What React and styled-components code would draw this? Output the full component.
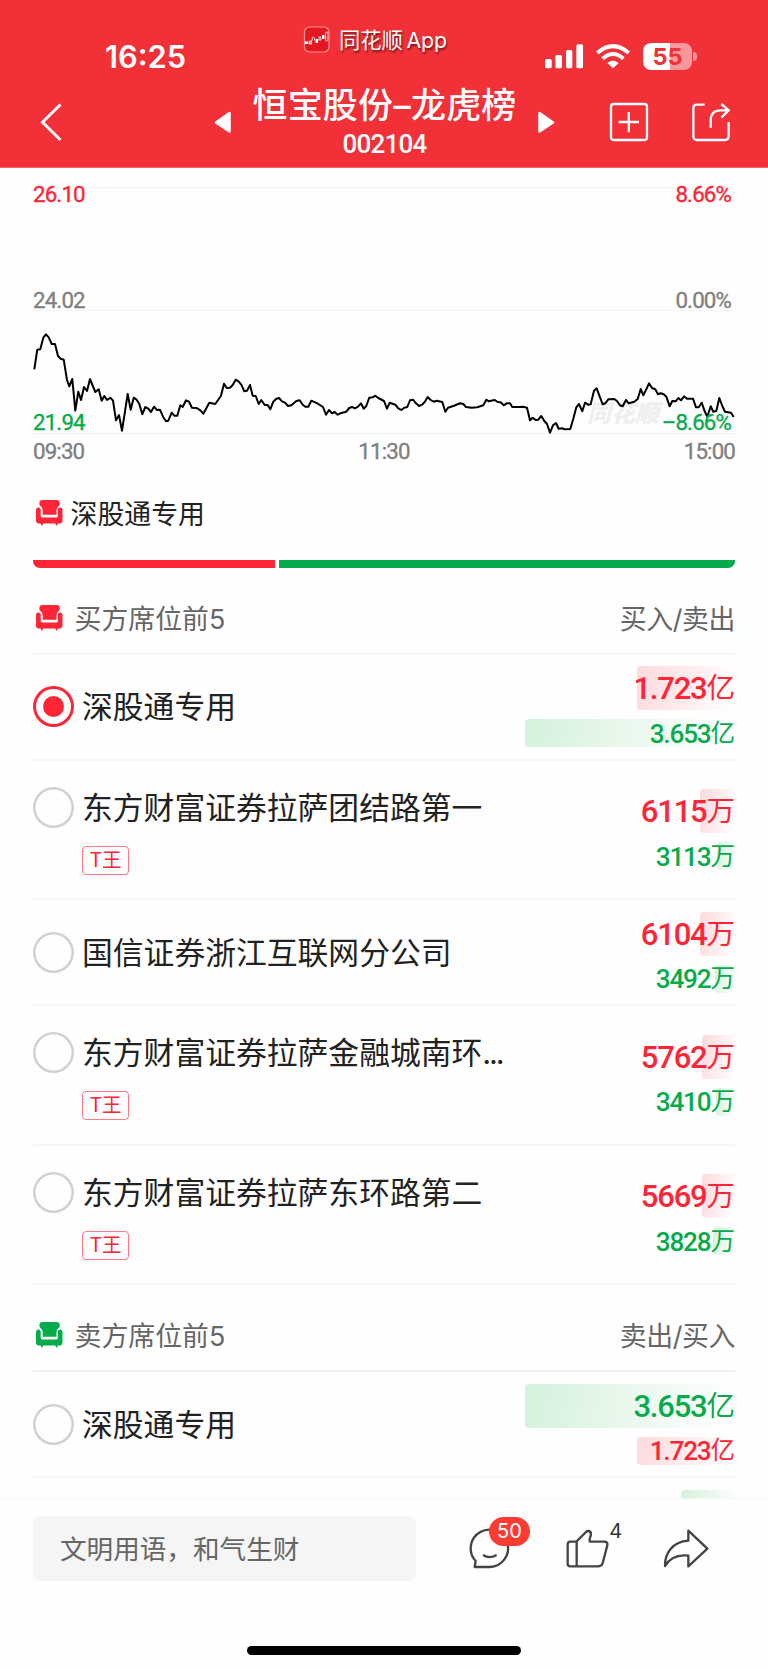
import React from "react";
import styled, { createGlobalStyle } from "styled-components";

const RED = "#ff2436";
const GREEN = "#07ab4b";
const CJK = 'Inter, "Noto Sans CJK SC", sans-serif';
const DIGITS = 'Roboto, "Noto Sans CJK SC", sans-serif';

const GlobalStyle = createGlobalStyle`
  * { box-sizing: border-box; }
  body { margin: 0; background: #fefefe; font-family: ${CJK}; }
  svg { display: block; flex: none; }
`;

const Screen = styled.div`
  width: 768px;
  height: 1669px;
  display: flex;
  flex-direction: column;
  overflow: hidden;
  background: #fefefe;
  white-space: nowrap;
`;

/* ---------- header ---------- */

const Header = styled.header`
  height: 168px;
  flex: none;
  background: #f23038;
  border-bottom: 1px solid #f5666c;
  color: #fff;
`;

const StatusBar = styled.div`
  height: 82px;
  display: flex;
  align-items: flex-start;
`;

const Clock = styled.div`
  width: 198px;
  margin: 39px 0 0 105px;
  font-size: 30.8px;
  line-height: 36px;
  font-weight: 600;
`;

const AppMark = styled.div`
  width: 242px;
  margin-top: 26px;
  display: flex;
  align-items: center;
  gap: 9px;
  font-size: 21.3px;
  line-height: 26px;
  word-spacing: -2.5px;
  text-shadow: 1px 2px 2px rgba(60, 0, 0, 0.65);
`;

const DeviceIcons = styled.div`
  margin-top: 43px;
  display: flex;
  align-items: center;
  gap: 13px;
`;

const Battery = styled.div`
  width: 49px;
  height: 27px;
  border-radius: 8px;
  background: linear-gradient(90deg, #fff 55%, #f8989c 55%);
  color: #f23038;
  font-size: 23.5px;
  line-height: 27px;
  font-weight: 700;
  text-align: center;
  position: relative;

  &::after {
    content: "";
    position: absolute;
    left: 50px;
    top: 9px;
    width: 4px;
    height: 9px;
    border-radius: 0 4px 4px 0;
    background: #f8989c;
  }
`;

const NavBar = styled.nav`
  height: 85px;
  display: flex;
  align-items: flex-start;
  padding: 20px 0 0 39px;
`;

const TitleGroup = styled.div`
  width: 341px;
  flex: none;
  margin-left: 151px;
  display: flex;
  align-items: flex-start;

  > svg { margin-top: 9px; }
`;

const TitleText = styled.div`
  width: 305px;
  margin-top: -18px;
  text-align: center;
`;

const Title = styled.h1`
  margin: 0;
  font-size: 35px;
  line-height: 42px;
  font-weight: 500;
  letter-spacing: 0.2px;
`;

const StockCode = styled.div`
  margin-top: 4px;
  font-family: ${DIGITS};
  font-size: 26px;
  line-height: 28px;
  font-weight: 500;
  letter-spacing: -0.8px;
`;

const NavActions = styled.div`
  display: flex;
  gap: 42px;
  margin-left: 54px;
`;

/* ---------- chart ---------- */

const Content = styled.main`
  height: 1330px;
  flex: none;
  overflow: hidden;
  padding: 19px 33px 0;
`;

const Chart = styled.section`
  position: relative;
  width: 702px;
`;

const Band = styled.div`
  height: 123px;
  border-top: 1px solid #f4f4f4;
  display: flex;
  flex-direction: column;
  justify-content: ${(p) => (p.$single ? "flex-end" : "space-between")};
  padding-bottom: ${(p) => (p.$single ? 3 : 2)}px;
`;

const Labels = styled.div`
  position: relative;
  z-index: 1;
  display: flex;
  justify-content: space-between;
  padding-right: ${(p) => p.$inset || 0}px;
  color: ${(p) => p.$color};
  font-family: ${DIGITS};
  font-size: 22.3px;
  line-height: ${(p) => p.$line || 15}px;
  letter-spacing: -0.85px;
  -webkit-text-stroke: 0.35px currentColor;
`;

const TimeAxis = styled.div`
  border-top: 1px solid #f0f0f0;
  padding-top: 10px;
`;

const PriceLine = styled.svg`
  position: absolute;
  left: 0;
  top: 0;
`;

const Watermark = styled.div`
  position: absolute;
  left: 554px;
  top: 213px;
  color: #efefef;
  font-size: 24px;
  line-height: 28px;
  font-weight: 900;
  font-style: italic;
`;

/* ---------- seats ---------- */

const SeatTitle = styled.div`
  display: flex;
  align-items: center;
  gap: 8px;
  height: 34px;
  margin-top: 38px;
  padding-left: 3px;
  color: #222;
  font-size: 26.9px;
  line-height: 34px;

  > svg { margin-bottom: 2px; }
`;

const Ratio = styled.div`
  display: flex;
  gap: 4px;
  height: 8px;
  margin-top: 29px;
  border-radius: 0 0 7px 7px;
  overflow: hidden;
`;

const RatioPart = styled.div`
  flex: ${(p) => p.$share};
  background: ${(p) => p.$color};
`;

const ListHead = styled.div`
  height: ${(p) => p.$height}px;
  border-bottom: ${(p) => (p.$height > 86 ? 2 : 1)}px solid #f1f1f1;
  display: flex;
  align-items: flex-end;
  justify-content: space-between;
  padding: 0 0 17px 3px;
  color: #666;
  font-size: 26.9px;
  line-height: 34px;
`;

const HeadLabel = styled.div`
  display: flex;
  align-items: center;
  gap: 12px;

  > svg { margin-bottom: 2px; }
`;

const HeadValue = styled.div`
  letter-spacing: -0.4px;
`;

const Row = styled.div`
  height: ${(p) => p.$height}px;
  border-bottom: 2px solid #f6f6f6;
  display: flex;
  align-items: center;
`;

const Radio = styled.div`
  width: 41px;
  height: 41px;
  flex: none;
  align-self: ${(p) => (p.$top ? "flex-start" : "center")};
  margin-top: ${(p) => (p.$top ? 26 : 0)}px;
  border-radius: 50%;
  box-shadow: inset 0 0 0 ${(p) => (p.$on ? `3px ${RED}` : "2.5px #d0d0d0")};
  display: flex;
  align-items: center;
  justify-content: center;

  &::after {
    content: "";
    width: 21px;
    height: 21px;
    border-radius: 50%;
    background: ${(p) => (p.$on ? RED : "transparent")};
  }
`;

const Broker = styled.div`
  flex: 1;
  align-self: ${(p) => (p.$top ? "flex-start" : "center")};
  margin-top: ${(p) => (p.$top ? 26 : 0)}px;
  padding-left: 8px;
`;

const Name = styled.div`
  color: #222;
  font-size: 30.8px;
  line-height: 41px;
`;

const Dots = styled.span`
  letter-spacing: -2.2px;
`;

const Tag = styled.div`
  width: 47px;
  height: 29px;
  margin-top: 18px;
  border: 1px solid #ff7c86;
  border-radius: 4px;
  color: ${RED};
  font-size: 19.5px;
  line-height: 27px;
  text-align: center;
`;

const Amounts = styled.div`
  width: 211px;
  display: flex;
  flex-direction: column;
  align-items: flex-end;
  gap: 9px;
`;

const tint = { buy: "255, 36, 54", sell: "7, 180, 50" };

const Amount = styled.div`
  width: ${(p) => p.$bar}px;
  height: ${(p) => (p.$large ? 44 : 28)}px;
  padding-top: ${(p) => (p.$large ? 2 : 1)}px;
  display: flex;
  justify-content: flex-end;
  align-items: center;
  border-radius: 4px 0 0 4px;
  background: linear-gradient(
    100deg,
    rgba(${(p) => tint[p.$side]}, 0.16) 5%,
    rgba(${(p) => tint[p.$side]}, 0) 96%
  );
  color: ${(p) => (p.$side === "buy" ? RED : GREEN)};
  font-family: ${DIGITS};
  font-size: ${(p) => (p.$large ? 31 : 26.2)}px;
  line-height: ${(p) => (p.$large ? 44 : 28)}px;
  font-weight: 500;
  letter-spacing: ${(p) => (p.$large ? -1.2 : -1.2)}px;
`;

const Unit = styled.span`
  font-size: ${(p) => (p.$large ? 28.5 : 24.5)}px;
  font-weight: 400;
  letter-spacing: 0;
`;

/* ---------- footer ---------- */

const Footer = styled.footer`
  height: 171px;
  flex: none;
  border-top: 1px solid #f6f6f6;
  background: #fefefe;
  display: flex;
  flex-direction: column;
  align-items: center;
  justify-content: space-between;
  padding: 17px 0 14px;
`;

const ActionBar = styled.div`
  width: 768px;
  display: flex;
  align-items: flex-start;
  padding-left: 33px;
`;

const CommentInput = styled.div`
  width: 383px;
  height: 65px;
  margin-right: 52px;
  border-radius: 8px;
  background: #f5f5f5;
  color: #666;
  padding-left: 27px;
  font-size: 26.6px;
  line-height: 67px;
`;

const Action = styled.div`
  position: relative;
  margin: 12px ${(p) => p.$gap}px 0 0;
`;

const Badge = styled.div`
  position: absolute;
  left: 21px;
  top: -11px;
  width: 41px;
  height: 29px;
  border-radius: 15px;
  background: #fa3c32;
  color: #fff;
  font-size: 20px;
  line-height: 29px;
  text-align: center;
`;

const LikeCount = styled.div`
  position: absolute;
  left: 44px;
  top: -9px;
  color: #333;
  font-size: 20px;
  line-height: 24px;
`;

const HomeIndicator = styled.div`
  width: 274px;
  height: 9px;
  border-radius: 5px;
  background: #000;
`;

/* ---------- drawings ---------- */

const Sofa = ({ color }) => (
  <svg width="26.5" height="25.5" viewBox="0 0 79 76" fill={color}>
    <path d="M10 10Q10 0 20 0H61Q71 0 71 10Q71 16 68 18Q61 22 61 32V44H20V32Q20 22 13 18Q10 16 10 10Z" />
    <path d="M0 30Q0 22 7 22Q14 22 14 30V46Q14 52 18 52H61Q65 52 65 46V30Q65 22 72 22Q79 22 79 30V60Q79 70 69 70H65L63 76H60L58 70H21L19 76H16L14 70H10Q0 70 0 60Z" />
  </svg>
);

const AppLogo = () => (
  <svg width="27" height="27" viewBox="0 0 27 27">
    <rect x="1.5" y="1" width="24.5" height="25" rx="5" fill="#e3191f" stroke="#fa9296" strokeWidth="1.2" />
    <g fill="#fff">
      <rect x="2" y="15.5" width="3.5" height="2.5" />
      <rect x="12.5" y="13" width="2.5" height="4" />
      <rect x="19" y="9" width="2.5" height="4" />
    </g>
    <g fill="none" stroke="#fff" strokeWidth="0.8">
      <rect x="6.7" y="15" width="1.8" height="3" />
      <path d="M9.2 14.5V12L10.4 11L11.6 12V14.5" />
      <rect x="16" y="11" width="1.8" height="3" />
      <rect x="22.6" y="6" width="2.3" height="9" rx="1" />
    </g>
  </svg>
);

const Signal = () => (
  <svg width="38" height="25" viewBox="531 132 114 75" fill="#fff">
    <rect x="531" y="177" width="20" height="28" rx="5" />
    <rect x="562" y="165" width="20" height="40" rx="5" />
    <rect x="594" y="150" width="19" height="55" rx="5" />
    <rect x="625" y="133" width="20" height="72" rx="5" />
  </svg>
);

const Wifi = () => (
  <svg width="34" height="25" viewBox="684 132 102 75" fill="none" stroke="#fff" strokeWidth="12">
    <path d="M688 159Q735 118 782 159" />
    <path d="M704 176Q735 148 766 176" />
    <path d="M735 205L718 189Q735 176 752 189Z" fill="#fff" stroke="none" />
  </svg>
);

const Back = () => (
  <svg width="24" height="40" viewBox="0 0 24 40" fill="none" stroke="#fff" strokeWidth="3">
    <path d="M21.500 2.500L3.500 20.200L21.500 38" />
  </svg>
);

const Arrow = ({ flip }) => (
  <svg width="18" height="22" viewBox="0 0 18 22" fill="#fff" stroke="#fff" strokeWidth="2.500" strokeLinejoin="round">
    <path d={flip ? "M2.500 2L16 11.500L2.500 20.500Z" : "M15.500 2L2 11.500L15.500 20.500Z"} />
  </svg>
);

const AddBox = () => (
  <svg width="40" height="40" viewBox="722 306 120 120" fill="none" stroke="#fff" strokeWidth="7">
    <rect x="728" y="312" width="108" height="108" rx="8" />
    <path d="M751 366H812M781.500 336V397" />
  </svg>
);

const ShareBox = () => (
  <svg width="40" height="40" viewBox="968 306 120 120" fill="none" stroke="#fff" strokeWidth="7">
    <path d="M1009 314H986Q975 314 975 325V409Q975 420 986 420H1070Q1081 420 1081 409V366" />
    <path d="M1027 383V362Q1027 331 1057 331H1080M1059 312L1081 331L1059 353" />
  </svg>
);

const CommentIcon = () => (
  <svg width="43.300" height="41.300" viewBox="60 684 130 124" fill="none" stroke="#444" strokeWidth="7">
    <path d="M80 801H126A56 56 0 1 0 83 783Z" strokeLinejoin="round" />
    <path d="M105 765Q125 778 146 765" />
  </svg>
);

const LikeIcon = () => (
  <svg width="45.300" height="40.700" viewBox="352 684 136 122" fill="none" stroke="#444" strokeWidth="7" strokeLinejoin="round">
    <path d="M387 725H368Q360 725 360 733V791Q360 799 368 799H450Q462 799 465 790L479 736Q481 725 471 725H428Q424 724 427 714L430 703Q430 693 421 693Q418 693 415 696L387 724V799" />
  </svg>
);

const ForwardIcon = () => (
  <svg width="46.700" height="40.700" viewBox="645 684 140 122" fill="none" stroke="#444" strokeWidth="7" strokeLinejoin="round">
    <path d="M651 798C650 760 675 724 721 722V692L778 746L721 799V767C690 763 665 775 651 798Z" />
  </svg>
);

const pricePoints =
  "34.3,369.3 37.3,349.7 40.3,349.3 43.3,337.7 46,334.3 48.7,337.3 51.7,344 55,344 58,356 60.7,358.7 63.7,359.7 67,380 69.3,386.3 72.3,379 75.3,410.7 78.3,391.7 81,400 84,387 87,391 90,379 95.3,392 98.7,389.3 101.7,400.7 104.3,396 107,400 110.3,397.7 113,400.7 116,420.3 119,415 122,430.7 127.7,394 130.7,409.7 133.7,397.7 136.3,399.3 139.3,404 142.3,414.3 145.3,407 148.3,408.7 151,412 154,406.7 157,410 160,409.7 163,416.7 166,421.3 168.3,420.7 171.7,412.7 174.3,415.7 177.3,415.7 180.3,405.3 182.7,407 186,400.3 189,401.7 192,407.7 196.7,408 200.7,410.7 203.3,413.7 209.3,402.7 215.3,404 221,395.7 224,383.7 226.7,388 230,387.7 232.7,385 235.7,379.7 238.7,381.7 241.3,384.7 244.3,391.3 247,390.7 250,385 252.7,395.7 255.7,396 258.7,404 261.3,400 264.7,405 267.7,405 270.3,409.3 273.3,401.7 276,399 279,398 282,401.3 285,402.7 288,406 291.3,405.3 296.3,401 299.7,400.3 302.7,404.7 305.3,406.7 308.3,406.7 311.3,400.7 317.3,403.3 323,407 326,414.7 329,410 332,413.3 334.7,412 337.7,414.7 340.3,413.3 346.3,411.7 349.3,408 352,407 355,408.3 358,406.7 361,403.3 363.7,408.7 366.3,406 369.3,397.7 372.7,397.3 375.3,395.7 378.3,398 384,401 387,408.7 389.7,402.7 395.3,404.7 398.3,408.3 401.3,410 404.3,407.7 407.3,407 410,400.3 413,399.7 416,403.3 419,406 422,404.7 424.7,402 427.7,397 430.7,400 433.7,401.7 436.7,400.7 442.3,402 445.3,411.7 448,407.7 454,405.7 460,403.3 463.3,404 466,407 471.7,407.7 477.3,407.3 483.3,405.3 486.3,399.7 488.7,401.3 494.7,400 497.7,402 500.7,402.3 503.7,405.3 506.7,403.3 510,403.3 512.3,407 519.7,407 523,406.7 527,407.7 530,420.3 532.7,417.7 535.7,420 538.3,419.7 541.3,416 544.3,421 547,424 550,432.7 553,425.3 556,423 558.7,428.7 562,428.3 564.7,429.3 570.3,429 573.3,418.7 576.3,407.3 579,404 582.3,411.3 585,402.7 588,404.7 590.7,404.3 594,390.7 596.7,388.3 599.7,396.7 602.7,404.3 605.3,403.3 608.3,399.3 614.3,399 617,401 620,405.3 622.7,406.3 626,400 628.7,403.3 634.3,401.7 637.7,399 640.7,389 643.3,395.3 646.3,389.3 649,383.3 652,388 655.3,389.3 658,394.3 660.7,393.3 663.7,394.3 666.3,396.7 669.7,406.3 672.3,401 675.7,401.3 678.3,398 681,400.3 684,396.3 687,398.7 693,398.7 696,407.3 698.7,407.3 701.7,402.7 704.7,411.3 707.3,416.7 710.7,406.3 713.3,411.7 716.3,411 719.3,398 722.3,406 725,411.7 731,412.7 733.7,417";

const buyers = [
  { name: "深股通专用", height: 107, on: true, first: ["1.723", "亿", 98], second: ["3.653", "亿", 210] },
  { name: "东方财富证券拉萨团结路第一", height: 139, tag: "T王", first: ["6115", "万", 35], second: ["3113", "万", 18] },
  { name: "国信证券浙江互联网分公司", height: 106, first: ["6104", "万", 35], second: ["3492", "万", 20] },
  { name: "东方财富证券拉萨金融城南环", more: true, height: 140, tag: "T王", first: ["5762", "万", 33], second: ["3410", "万", 19] },
  { name: "东方财富证券拉萨东环路第二", height: 139, tag: "T王", first: ["5669", "万", 33], second: ["3828", "万", 22] },
];

const sellers = [
  { name: "深股通专用", height: 106, first: ["3.653", "亿", 210], second: ["1.723", "亿", 98] },
  { name: "", height: 106, first: ["", "", 54], second: ["", "", 0] },
];

const Value = ({ data: [value, unit, bar], side, large }) => (
  <Amount $bar={bar} $side={side} $large={large}>
    {value}
    <Unit $large={large}>{unit}</Unit>
  </Amount>
);

const SeatRow = ({ seat, sides }) => {
  const top = Boolean(seat.tag);
  return (
    <Row $height={seat.height}>
      <Radio $on={seat.on} $top={top} />
      <Broker $top={top}>
        <Name>
          {seat.name}
          {seat.more && <Dots>...</Dots>}
        </Name>
        {seat.tag && <Tag>{seat.tag}</Tag>}
      </Broker>
      <Amounts>
        <Value data={seat.first} side={sides[0]} large />
        <Value data={seat.second} side={sides[1]} />
      </Amounts>
    </Row>
  );
};

export default function App() {
  return (
    <Screen>
      <GlobalStyle />
      <Header>
        <StatusBar>
          <Clock>16:25</Clock>
          <AppMark>
            <AppLogo />
            <span>同花顺 App</span>
          </AppMark>
          <DeviceIcons>
            <Signal />
            <Wifi />
            <Battery>55</Battery>
          </DeviceIcons>
        </StatusBar>
        <NavBar>
          <Back />
          <TitleGroup>
            <Arrow />
            <TitleText>
              <Title>恒宝股份–龙虎榜</Title>
              <StockCode>002104</StockCode>
            </TitleText>
            <Arrow flip />
          </TitleGroup>
          <NavActions>
            <AddBox />
            <ShareBox />
          </NavActions>
        </NavBar>
      </Header>

      <Content>
        <Chart>
          <Watermark>同花顺</Watermark>
          <Band>
            <Labels $color={RED} $inset={4} $line={13}>
              <span>26.10</span>
              <span>8.66%</span>
            </Labels>
            <Labels $color="#808080" $inset={4}>
              <span>24.02</span>
              <span>0.00%</span>
            </Labels>
          </Band>
          <Band $single>
            <Labels $color={GREEN} $inset={4}>
              <span>21.94</span>
              <span>–8.66%</span>
            </Labels>
          </Band>
          <TimeAxis>
            <Labels $color="#808080">
              <span>09:30</span>
              <span>11:30</span>
              <span>15:00</span>
            </Labels>
          </TimeAxis>
          <PriceLine width="702" height="248" viewBox="33 187 702 248">
            <polyline points={pricePoints} fill="none" stroke="#000" strokeWidth="2" strokeLinejoin="round" />
          </PriceLine>
        </Chart>

        <SeatTitle>
          <Sofa color={RED} />
          <span>深股通专用</span>
        </SeatTitle>
        <Ratio>
          <RatioPart $share={242} $color={RED} />
          <RatioPart $share={456} $color={GREEN} />
        </Ratio>

        <ListHead $height={86}>
          <HeadLabel>
            <Sofa color={RED} />
            <span>买方席位前5</span>
          </HeadLabel>
          <HeadValue>买入/卖出</HeadValue>
        </ListHead>
        {buyers.map((seat) => (
          <SeatRow key={seat.name} seat={seat} sides={["buy", "sell"]} />
        ))}

        <ListHead $height={87}>
          <HeadLabel>
            <Sofa color={GREEN} />
            <span>卖方席位前5</span>
          </HeadLabel>
          <HeadValue>卖出/买入</HeadValue>
        </ListHead>
        {sellers.map((seat) => (
          <SeatRow key={seat.name} seat={seat} sides={["sell", "buy"]} />
        ))}
      </Content>

      <Footer>
        <ActionBar>
          <CommentInput>文明用语，和气生财</CommentInput>
          <Action $gap={54}>
            <CommentIcon />
            <Badge>50</Badge>
          </Action>
          <Action $gap={52.4}>
            <LikeIcon />
            <LikeCount>4</LikeCount>
          </Action>
          <Action $gap={0}>
            <ForwardIcon />
          </Action>
        </ActionBar>
        <HomeIndicator />
      </Footer>
    </Screen>
  );
}
